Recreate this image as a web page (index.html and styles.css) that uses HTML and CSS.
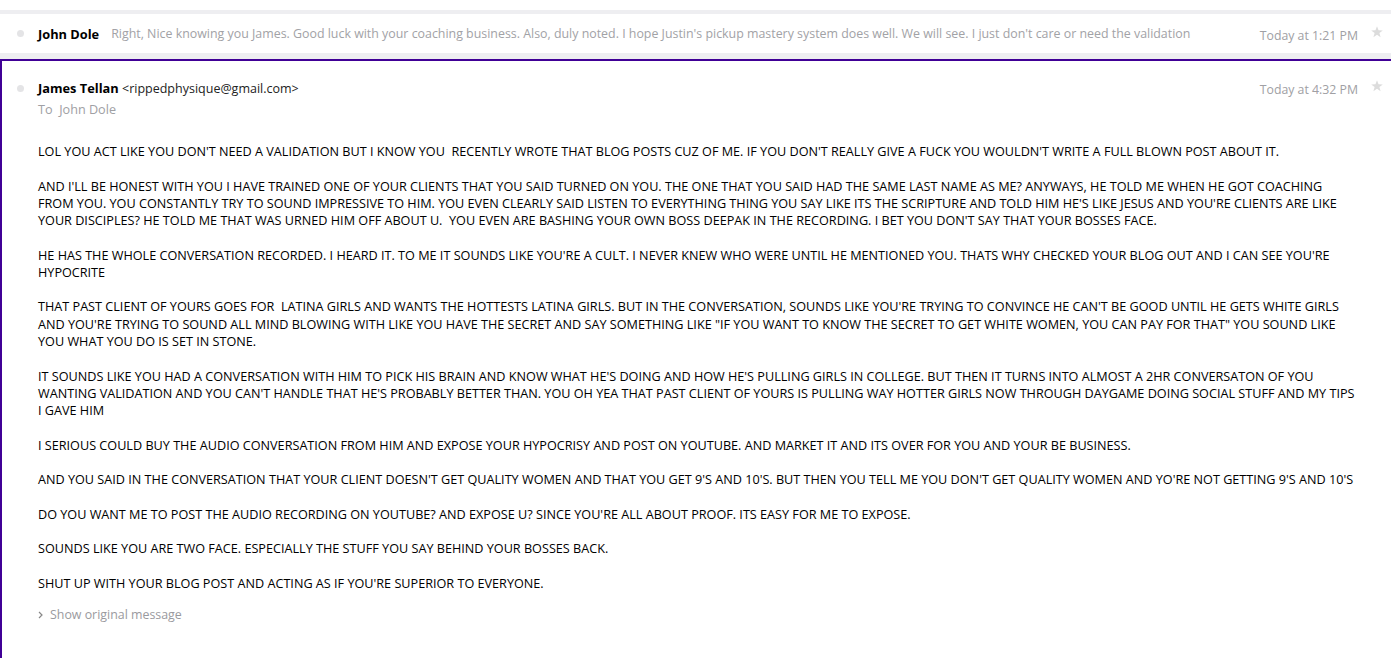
FILE: index.html
```html
<!DOCTYPE html>
<html>
<head>
<meta charset="utf-8">
<link rel="stylesheet" href="styles.css">
</head>
<body>
<div class="page">
  <div class="thread">
    <div class="collapsed">
      <span class="dot"></span>
      <span class="sender">John Dole</span>
      <span class="preview">Right, Nice knowing you James. Good luck with your coaching business. Also, duly noted. I hope Justin's pickup mastery system does well. We will see. I just don't care or need the validation</span>
      <span class="time">Today at 1:21 PM</span>
      <svg class="star" viewBox="0 0 12 12" width="12" height="12"><polygon points="6,0.3 7.5,4.3 11.8,4.4 8.4,7 9.6,11.3 6,8.8 2.4,11.3 3.6,7 0.2,4.4 4.5,4.3" fill="#dcdcdc"/></svg>
    </div>
    <div class="message">
      <div class="msg-head">
        <span class="dot"></span>
        <div class="who">
          <div class="from"><span class="sender">James Tellan</span> <span class="email">&lt;rippedphysique@gmail.com&gt;</span></div>
          <div class="to">To&nbsp; John Dole</div>
        </div>
        <span class="time">Today at 4:32 PM</span>
        <svg class="star" viewBox="0 0 12 12" width="12" height="12"><polygon points="6,0.3 7.5,4.3 11.8,4.4 8.4,7 9.6,11.3 6,8.8 2.4,11.3 3.6,7 0.2,4.4 4.5,4.3" fill="#dcdcdc"/></svg>
      </div>
      <div class="msg-body">
        <p>LOL YOU ACT LIKE YOU DON'T NEED A VALIDATION BUT I KNOW YOU&nbsp; RECENTLY WROTE THAT BLOG POSTS CUZ OF ME. IF YOU DON'T REALLY GIVE A FUCK YOU WOULDN'T WRITE A FULL BLOWN POST ABOUT IT.</p>
        <p>AND I'LL BE HONEST WITH YOU I HAVE TRAINED ONE OF YOUR CLIENTS THAT YOU SAID TURNED ON YOU. THE ONE THAT YOU SAID HAD THE SAME LAST NAME AS ME? ANYWAYS, HE TOLD ME WHEN HE GOT COACHING<br>FROM YOU. YOU CONSTANTLY TRY TO SOUND IMPRESSIVE TO HIM. YOU EVEN CLEARLY SAID LISTEN TO EVERYTHING THING YOU SAY LIKE ITS THE SCRIPTURE AND TOLD HIM HE'S LIKE JESUS AND YOU'RE CLIENTS ARE LIKE<br>YOUR DISCIPLES? HE TOLD ME THAT WAS URNED HIM OFF ABOUT U.&nbsp; YOU EVEN ARE BASHING YOUR OWN BOSS DEEPAK IN THE RECORDING. I BET YOU DON'T SAY THAT YOUR BOSSES FACE.</p>
        <p>HE HAS THE WHOLE CONVERSATION RECORDED. I HEARD IT. TO ME IT SOUNDS LIKE YOU'RE A CULT. I NEVER KNEW WHO WERE UNTIL HE MENTIONED YOU. THATS WHY CHECKED YOUR BLOG OUT AND I CAN SEE YOU'RE<br>HYPOCRITE</p>
        <p>THAT PAST CLIENT OF YOURS GOES FOR&nbsp; LATINA GIRLS AND WANTS THE HOTTESTS LATINA GIRLS. BUT IN THE CONVERSATION, SOUNDS LIKE YOU'RE TRYING TO CONVINCE HE CAN'T BE GOOD UNTIL HE GETS WHITE GIRLS<br>AND YOU'RE TRYING TO SOUND ALL MIND BLOWING WITH LIKE YOU HAVE THE SECRET AND SAY SOMETHING LIKE "IF YOU WANT TO KNOW THE SECRET TO GET WHITE WOMEN, YOU CAN PAY FOR THAT" YOU SOUND LIKE<br>YOU WHAT YOU DO IS SET IN STONE.</p>
        <p>IT SOUNDS LIKE YOU HAD A CONVERSATION WITH HIM TO PICK HIS BRAIN AND KNOW WHAT HE'S DOING AND HOW HE'S PULLING GIRLS IN COLLEGE. BUT THEN IT TURNS INTO ALMOST A 2HR CONVERSATON OF YOU<br>WANTING VALIDATION AND YOU CAN'T HANDLE THAT HE'S PROBABLY BETTER THAN. YOU OH YEA THAT PAST CLIENT OF YOURS IS PULLING WAY HOTTER GIRLS NOW THROUGH DAYGAME DOING SOCIAL STUFF AND MY TIPS<br>I GAVE HIM</p>
        <p>I SERIOUS COULD BUY THE AUDIO CONVERSATION FROM HIM AND EXPOSE YOUR HYPOCRISY AND POST ON YOUTUBE. AND MARKET IT AND ITS OVER FOR YOU AND YOUR BE BUSINESS.</p>
        <p>AND YOU SAID IN THE CONVERSATION THAT YOUR CLIENT DOESN'T GET QUALITY WOMEN AND THAT YOU GET 9'S AND 10'S. BUT THEN YOU TELL ME YOU DON'T GET QUALITY WOMEN AND YO'RE NOT GETTING 9'S AND 10'S</p>
        <p>DO YOU WANT ME TO POST THE AUDIO RECORDING ON YOUTUBE? AND EXPOSE U? SINCE YOU'RE ALL ABOUT PROOF. ITS EASY FOR ME TO EXPOSE.</p>
        <p>SOUNDS LIKE YOU ARE TWO FACE. ESPECIALLY THE STUFF YOU SAY BEHIND YOUR BOSSES BACK.</p>
        <p>SHUT UP WITH YOUR BLOG POST AND ACTING AS IF YOU'RE SUPERIOR TO EVERYONE.</p>
      </div>
      <div class="show-original">
        <svg class="chev" viewBox="0 0 5 8" width="5" height="8"><polyline points="1,1 4,4 1,7" fill="none" stroke="#888" stroke-width="1.2"/></svg>
        <span>Show original message</span>
      </div>
    </div>
  </div>
</div>
</body>
</html>
```
FILE: styles.css
```css
html, body {
  margin: 0;
  padding: 0;
  background: #fff;
}
body {
  font-family: "Open Sans", "Noto Sans", "Liberation Sans", sans-serif;
  font-size: 12.65px;
  color: #000;
  overflow: hidden;
}
.page {
  padding-top: 10px;
}
.thread {
  border-top: 4px solid #eeeef1;
}
.collapsed {
  height: 39px;
  display: flex;
  align-items: center;
  padding-left: 17px;
  padding-right: 8px;
  border-bottom: 6px solid #eeeef1;
}
.dot {
  width: 7px;
  height: 7px;
  border-radius: 50%;
  background: #e4e4e6;
  flex: none;
  margin-right: 14px;
}
.sender {
  font-weight: 700;
  color: #000;
  font-size: 12.8px;
}
.collapsed .sender {
  margin-right: 12px;
}
.preview {
  color: #a2a2a6;
  font-size: 12.4px;
  flex: 1;
  white-space: nowrap;
  overflow: hidden;
}
.time {
  color: #a0a0a4;
  font-size: 12.3px;
  margin-left: 20px;
  margin-right: 13px;
  white-space: nowrap;
}
.collapsed .time {
  margin-top: 3px;
}
.star {
  flex: none;
  margin-top: -4px;
}
.message {
  border-top: 2px solid #400096;
  border-left: 2px solid #400096;
  padding: 19px 8px 40px 15px;
}
.msg-head {
  display: flex;
  align-items: flex-start;
  line-height: 17px;
}
.msg-head .dot {
  margin-top: 5px;
}
.who {
  flex: 1;
}
.email {
  color: #222;
  font-size: 12.5px;
}
.to {
  color: #a0a0a4;
  margin-top: 4px;
}
.msg-head .time {
  margin-top: 1px;
}
.msg-head .star {
  margin-top: 0;
}
.msg-body {
  padding-left: 21px;
  padding-top: 25px;
  line-height: 17.28px;
  color: #000;
}
.msg-body p {
  margin: 0 0 17.28px 0;
  white-space: nowrap;
}
.msg-body p:last-child {
  margin-bottom: 0;
}
.show-original {
  display: flex;
  align-items: center;
  padding-left: 21px;
  margin-top: 14px;
  line-height: 17px;
  color: #9a9a9e;
  font-size: 12.4px;
}
.chev {
  margin-right: 7px;
}
```
